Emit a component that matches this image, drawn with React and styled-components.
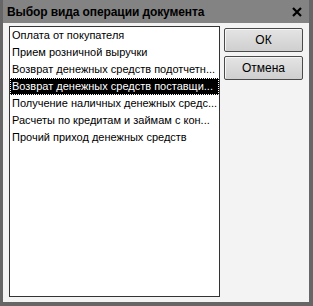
import React from 'react';
import styled, { createGlobalStyle } from 'styled-components';

const items = [
  'Оплата от покупателя',
  'Прием розничной выручки',
  'Возврат денежных средств подотчетн...',
  'Возврат денежных средств поставщи...',
  'Получение наличных денежных средс...',
  'Расчеты по кредитам и займам с кон...',
  'Прочий приход денежных средств',
];

const Global = createGlobalStyle`
  html, body {
    margin: 0;
    padding: 0;
    background: #6b6b6b;
  }
  body {
    font-family: 'Liberation Sans', Arial, sans-serif;
  }
`;

const Window = styled.div`
  width: 313px;
  height: 306px;
  box-sizing: border-box;
  display: flex;
  flex-direction: column;
  background: #868686;
  border-left: 3px solid #666;
  border-right: 4px solid #666;
  border-bottom: 4px solid #666;
`;

const TitleBar = styled.div`
  height: 23px;
  flex: 0 0 23px;
  display: flex;
  align-items: center;
  justify-content: space-between;
  padding: 0 7px 0 4px;
  background: #838383;
`;

const Title = styled.span`
  font-size: 12px;
  font-weight: bold;
  color: #000;
  letter-spacing: -0.1px;
`;

const Body = styled.div`
  flex: 1;
  display: flex;
  gap: 4px;
  padding: 3px 6px 5px 6px;
  background: #f3f3f3;
`;

const List = styled.ul`
  flex: 0 0 211px;
  box-sizing: border-box;
  margin: 0;
  padding: 0;
  list-style: none;
  background: #fff;
  border: 1px solid #333;
  overflow: hidden;
`;

const Item = styled.li`
  height: 17px;
  line-height: 17px;
  padding: 0 2px 0 2px;
  font-size: 11px;
  white-space: nowrap;
  overflow: hidden;
  color: ${(p) => (p.$selected ? '#fff' : '#000')};
  background: ${(p) => (p.$selected ? '#000' : 'transparent')};
  outline: ${(p) => (p.$selected ? '1px dotted #fff' : 'none')};
  outline-offset: -1px;
`;

const Buttons = styled.div`
  display: flex;
  flex-direction: column;
  gap: 4px;
  padding-top: 2px;
`;

const Button = styled.button`
  width: 79px;
  height: 24px;
  box-sizing: border-box;
  border: 1px solid #4a4a4a;
  border-radius: 2px;
  background: linear-gradient(#e4e4e4, #cfcfcf);
  box-shadow: inset 1px 1px 0 #f6f6f6;
  font-family: 'Liberation Sans', Arial, sans-serif;
  font-size: 12px;
  color: #000;
  padding: 0;
`;

function CloseIcon() {
  return (
    <svg width="10" height="10" viewBox="0 0 10 10">
      <path d="M1 1 L9 9 M9 1 L1 9" stroke="#000" strokeWidth="2.2" />
    </svg>
  );
}

export default function App() {
  return (
    <>
      <Global />
      <Window>
        <TitleBar>
          <Title>Выбор вида операции документа</Title>
          <CloseIcon />
        </TitleBar>
        <Body>
          <List>
            {items.map((it, i) => (
              <Item key={it} $selected={i === 3}>
                {it}
              </Item>
            ))}
          </List>
          <Buttons>
            <Button>ОК</Button>
            <Button>Отмена</Button>
          </Buttons>
        </Body>
      </Window>
    </>
  );
}
